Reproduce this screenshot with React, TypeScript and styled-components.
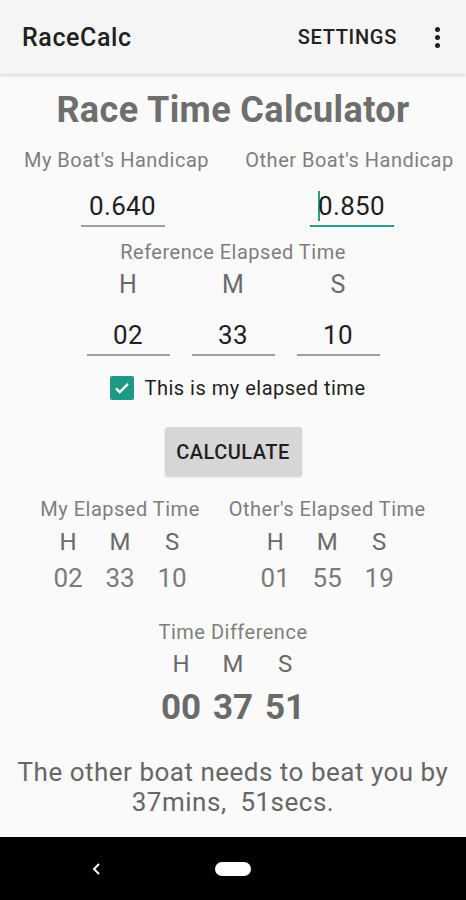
import React from 'react';
import styled, { createGlobalStyle } from 'styled-components';

// Global page setup
const GlobalStyle = createGlobalStyle`
    html, body {
        margin: 0;
        padding: 0;
        background: #fafafa;
    }
    body {
        font-family: Roboto, 'Noto Sans', Arial, sans-serif;
    }
`;

// Style-Component setup
const Screen = styled.div`
    width: 466px;
    height: 900px;
    display: flex;
    flex-direction: column;
    background: #fafafa;
    overflow: hidden;
`;

const AppBar = styled.header`
    height: 74px;
    flex-shrink: 0;
    display: flex;
    align-items: center;
    padding: 0 22px;
    background: #f5f5f5;
    box-shadow: 0 2px 3px rgba(0, 0, 0, 0.12);
    position: relative;
    z-index: 1;
`;

const AppTitle = styled.div`
    flex: 1;
    font-size: 25px;
    font-weight: 500;
    letter-spacing: 0.6px;
    color: #212121;
`;

const ActionText = styled.div`
    font-size: 20px;
    font-weight: 500;
    color: #212121;
    letter-spacing: 0.7px;
    margin-right: 37px;
`;

const MenuDots = styled.div`
    width: 6px;
    display: flex;
    flex-direction: column;
    align-items: center;
    gap: 3px;
    margin-right: 4px;

    span {
        width: 5px;
        height: 5px;
        border-radius: 50%;
        background: #212121;
    }
`;

const Content = styled.main`
    flex: 1;
    display: flex;
    flex-direction: column;
    align-items: center;
    padding-top: 16px;
`;

const Title = styled.h1`
    margin: 0;
    font-size: 36px;
    line-height: 40px;
    font-weight: 700;
    letter-spacing: 0.4px;
    color: #6e6e6e;
`;

const Label = styled.div<{ $mt?: number }>`
    margin-top: ${p => p.$mt || 0}px;
    font-size: 20px;
    line-height: 24px;
    letter-spacing: 0.5px;
    color: #7e7e7e;
    text-align: center;
    white-space: nowrap;
`;

const HandicapGrid = styled.div`
    margin-top: 18px;
    width: 100%;
    display: grid;
    grid-template-columns: 1fr 1fr;
    justify-items: center;
    row-gap: 19px;
`;

const Field = styled.div<{ $w: number; $focused?: boolean; $shift?: number }>`
    width: ${p => p.$w}px;
    position: relative;
    left: ${p => p.$shift || 0}px;
    padding-bottom: 4px;
    border-bottom: 2px solid ${p => (p.$focused ? '#26a08c' : '#9e9e9e')};
    font-size: 26px;
    line-height: 30px;
    letter-spacing: 0.3px;
    color: #1f1f1f;
    text-align: center;
`;

const Caret = styled.span`
    display: inline-block;
    width: 2px;
    height: 30px;
    margin-right: -2px;
    vertical-align: top;
    background: #26a08c;
`;

const HmsGrid = styled.div<{ $col: number; $gap: number; $mt: number }>`
    margin-top: ${p => p.$mt}px;
    display: grid;
    grid-template-columns: repeat(3, ${p => p.$col}px);
    column-gap: ${p => p.$gap}px;
    justify-items: center;
`;

const Hms = styled.div<{ $size?: number; $lh?: number; $bold?: boolean; $color?: string }>`
    font-size: ${p => p.$size || 25}px;
    line-height: ${p => p.$lh || 30}px;
    font-weight: ${p => (p.$bold ? 700 : 400)};
    color: ${p => p.$color || '#6a6a6a'};
`;

const CheckRow = styled.label`
    margin-top: 19px;
    margin-left: 10px;
    height: 26px;
    display: flex;
    align-items: center;
    gap: 10px;
    font-size: 20px;
    letter-spacing: 0.5px;
    color: #1f1f1f;
`;

const CheckBox = styled.span`
    width: 24px;
    height: 24px;
    border-radius: 2px;
    background: #1f9885;
    display: flex;
    align-items: center;
    justify-content: center;
`;

const CalcButton = styled.button`
    margin-top: 26px;
    width: 137px;
    height: 49px;
    border: none;
    border-radius: 3px;
    background: #d6d6d6;
    box-shadow: 0 1px 2px rgba(0, 0, 0, 0.18);
    font-family: inherit;
    font-size: 20px;
    font-weight: 500;
    letter-spacing: 0.5px;
    color: #1f1f1f;
`;

const ResultsRow = styled.div`
    margin-top: 21px;
    display: flex;
    justify-content: center;
    gap: 29px;
`;

const ResultGroup = styled.div`
    display: flex;
    flex-direction: column;
    align-items: center;
`;

const Message = styled.p`
    margin: 29px 0 0;
    padding: 0 8px;
    font-size: 26px;
    line-height: 30px;
    letter-spacing: 0.5px;
    color: #666;
    text-align: center;
    white-space: nowrap;
`;

const NavBar = styled.nav`
    height: 63px;
    flex-shrink: 0;
    background: #000;
    display: flex;
    align-items: center;
`;

const NavBack = styled.div`
    width: 194px;
    display: flex;
    padding-left: 91px;
    box-sizing: border-box;
`;

const HomePill = styled.div`
    margin-left: 21px;
    width: 36px;
    height: 14px;
    border-radius: 7px;
    background: #fff;
`;

const labels = ['H', 'M', 'S'];

const ResultBlock: React.FC<{ title: string; values: string[] }> = ({ title, values }) => (
    <ResultGroup>
        <Label>{title}</Label>
        <HmsGrid $col={52} $gap={0} $mt={7}>
            {labels.map(l => (
                <Hms key={l} $size={24} $lh={28}>
                    {l}
                </Hms>
            ))}
        </HmsGrid>
        <HmsGrid $col={52} $gap={0} $mt={8}>
            {values.map((v, i) => (
                <Hms key={i} $size={26} $lh={28} $color="#7a7a7a">
                    {v}
                </Hms>
            ))}
        </HmsGrid>
    </ResultGroup>
);

// <App /> Functional Component
const App: React.FC = (): React.ReactElement => {
    return (
        <>
            <GlobalStyle />
            <Screen>
                <AppBar>
                    <AppTitle>RaceCalc</AppTitle>
                    <ActionText>SETTINGS</ActionText>
                    <MenuDots>
                        <span />
                        <span />
                        <span />
                    </MenuDots>
                </AppBar>

                <Content>
                    <Title>Race Time Calculator</Title>

                    <HandicapGrid>
                        <Label>My Boat&apos;s Handicap</Label>
                        <Label>Other Boat&apos;s Handicap</Label>
                        <Field $w={84} $shift={6}>
                            0.640
                        </Field>
                        <Field $w={84} $focused $shift={2}>
                            <Caret />
                            0.850
                        </Field>
                    </HandicapGrid>

                    <Label $mt={13}>Reference Elapsed Time</Label>
                    <HmsGrid $col={83} $gap={22} $mt={6}>
                        {labels.map(l => (
                            <Hms key={l}>{l}</Hms>
                        ))}
                    </HmsGrid>
                    <HmsGrid $col={83} $gap={22} $mt={20}>
                        {['02', '33', '10'].map(v => (
                            <Field key={v} $w={83}>
                                {v}
                            </Field>
                        ))}
                    </HmsGrid>

                    <CheckRow>
                        <CheckBox>
                            <svg width="18" height="18" viewBox="0 0 24 24">
                                <path d="M4 12.5l5 5L20 6.5" fill="none" stroke="#fff" strokeWidth="3" />
                            </svg>
                        </CheckBox>
                        This is my elapsed time
                    </CheckRow>

                    <CalcButton>CALCULATE</CalcButton>

                    <ResultsRow>
                        <ResultBlock title="My Elapsed Time" values={['02', '33', '10']} />
                        <ResultBlock title="Other's Elapsed Time" values={['01', '55', '19']} />
                    </ResultsRow>

                    <Label $mt={28}>Time Difference</Label>
                    <HmsGrid $col={52} $gap={0} $mt={6}>
                        {labels.map(l => (
                            <Hms key={l} $size={24} $lh={28}>
                                {l}
                            </Hms>
                        ))}
                    </HmsGrid>
                    <HmsGrid $col={52} $gap={0} $mt={10}>
                        {['00', '37', '51'].map(v => (
                            <Hms key={v} $size={35} $lh={40} $bold>
                                {v}
                            </Hms>
                        ))}
                    </HmsGrid>

                    <Message>
                        The other boat needs to beat you by
                        <br />
                        37mins,&nbsp; 51secs.
                    </Message>
                </Content>

                <NavBar>
                    <NavBack>
                        <svg width="12" height="16" viewBox="0 0 12 16">
                            <path d="M8 3L3 8l5 5" fill="none" stroke="#fff" strokeWidth="2" />
                        </svg>
                    </NavBack>
                    <HomePill />
                </NavBar>
            </Screen>
        </>
    );
};

export default App;
